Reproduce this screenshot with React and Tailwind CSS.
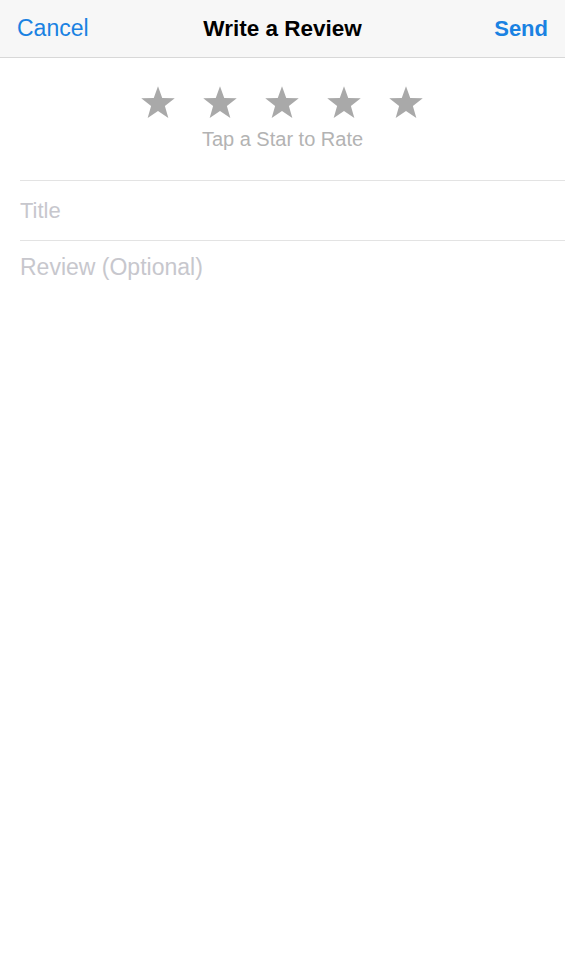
function Star() {
  return (
    <svg width="38" height="36" viewBox="0 0 24 23" className="fill-[#a9a9a9]">
      <path d="M12 0.8 L14.7 8.3 L22.7 8.5 L16.4 13.4 L18.6 21.1 L12 16.6 L5.4 21.1 L7.6 13.4 L1.3 8.5 L9.3 8.3 Z" />
    </svg>
  )
}

export default function App() {
  return (
    <div className="min-h-[975px] bg-white font-['Liberation_Sans',sans-serif]">
      {/* Nav bar */}
      <header className="h-[58px] bg-[#f7f7f7] border-b border-[#d8d8d8] grid grid-cols-[1fr_auto_1fr] items-center px-[17px]">
        <button className="justify-self-start text-[23px] text-[#1a82e2]">Cancel</button>
        <h1 className="text-[22.5px] font-bold text-black">Write a Review</h1>
        <button className="justify-self-end text-[22px] font-bold text-[#1a82e2]">Send</button>
      </header>

      {/* Rating */}
      <div className="flex flex-col items-center pt-[27px] pb-[31px]">
        <div className="flex gap-[24px] pr-[2px]">
          <Star />
          <Star />
          <Star />
          <Star />
          <Star />
        </div>
        <p className="text-[20px] text-[#b3b3b3] mt-[8px] leading-none">Tap a Star to Rate</p>
      </div>

      {/* Fields */}
      <div className="pl-[20px]">
        <div className="border-t border-[#e3e3e3] h-[60px] flex items-center">
          <span className="text-[22px] text-[#c7c7cd]">Title</span>
        </div>
        <div className="border-t border-[#e3e3e3] pt-[9px]">
          <span className="text-[23px] text-[#c7c7cd]">Review (Optional)</span>
        </div>
      </div>
    </div>
  )
}
